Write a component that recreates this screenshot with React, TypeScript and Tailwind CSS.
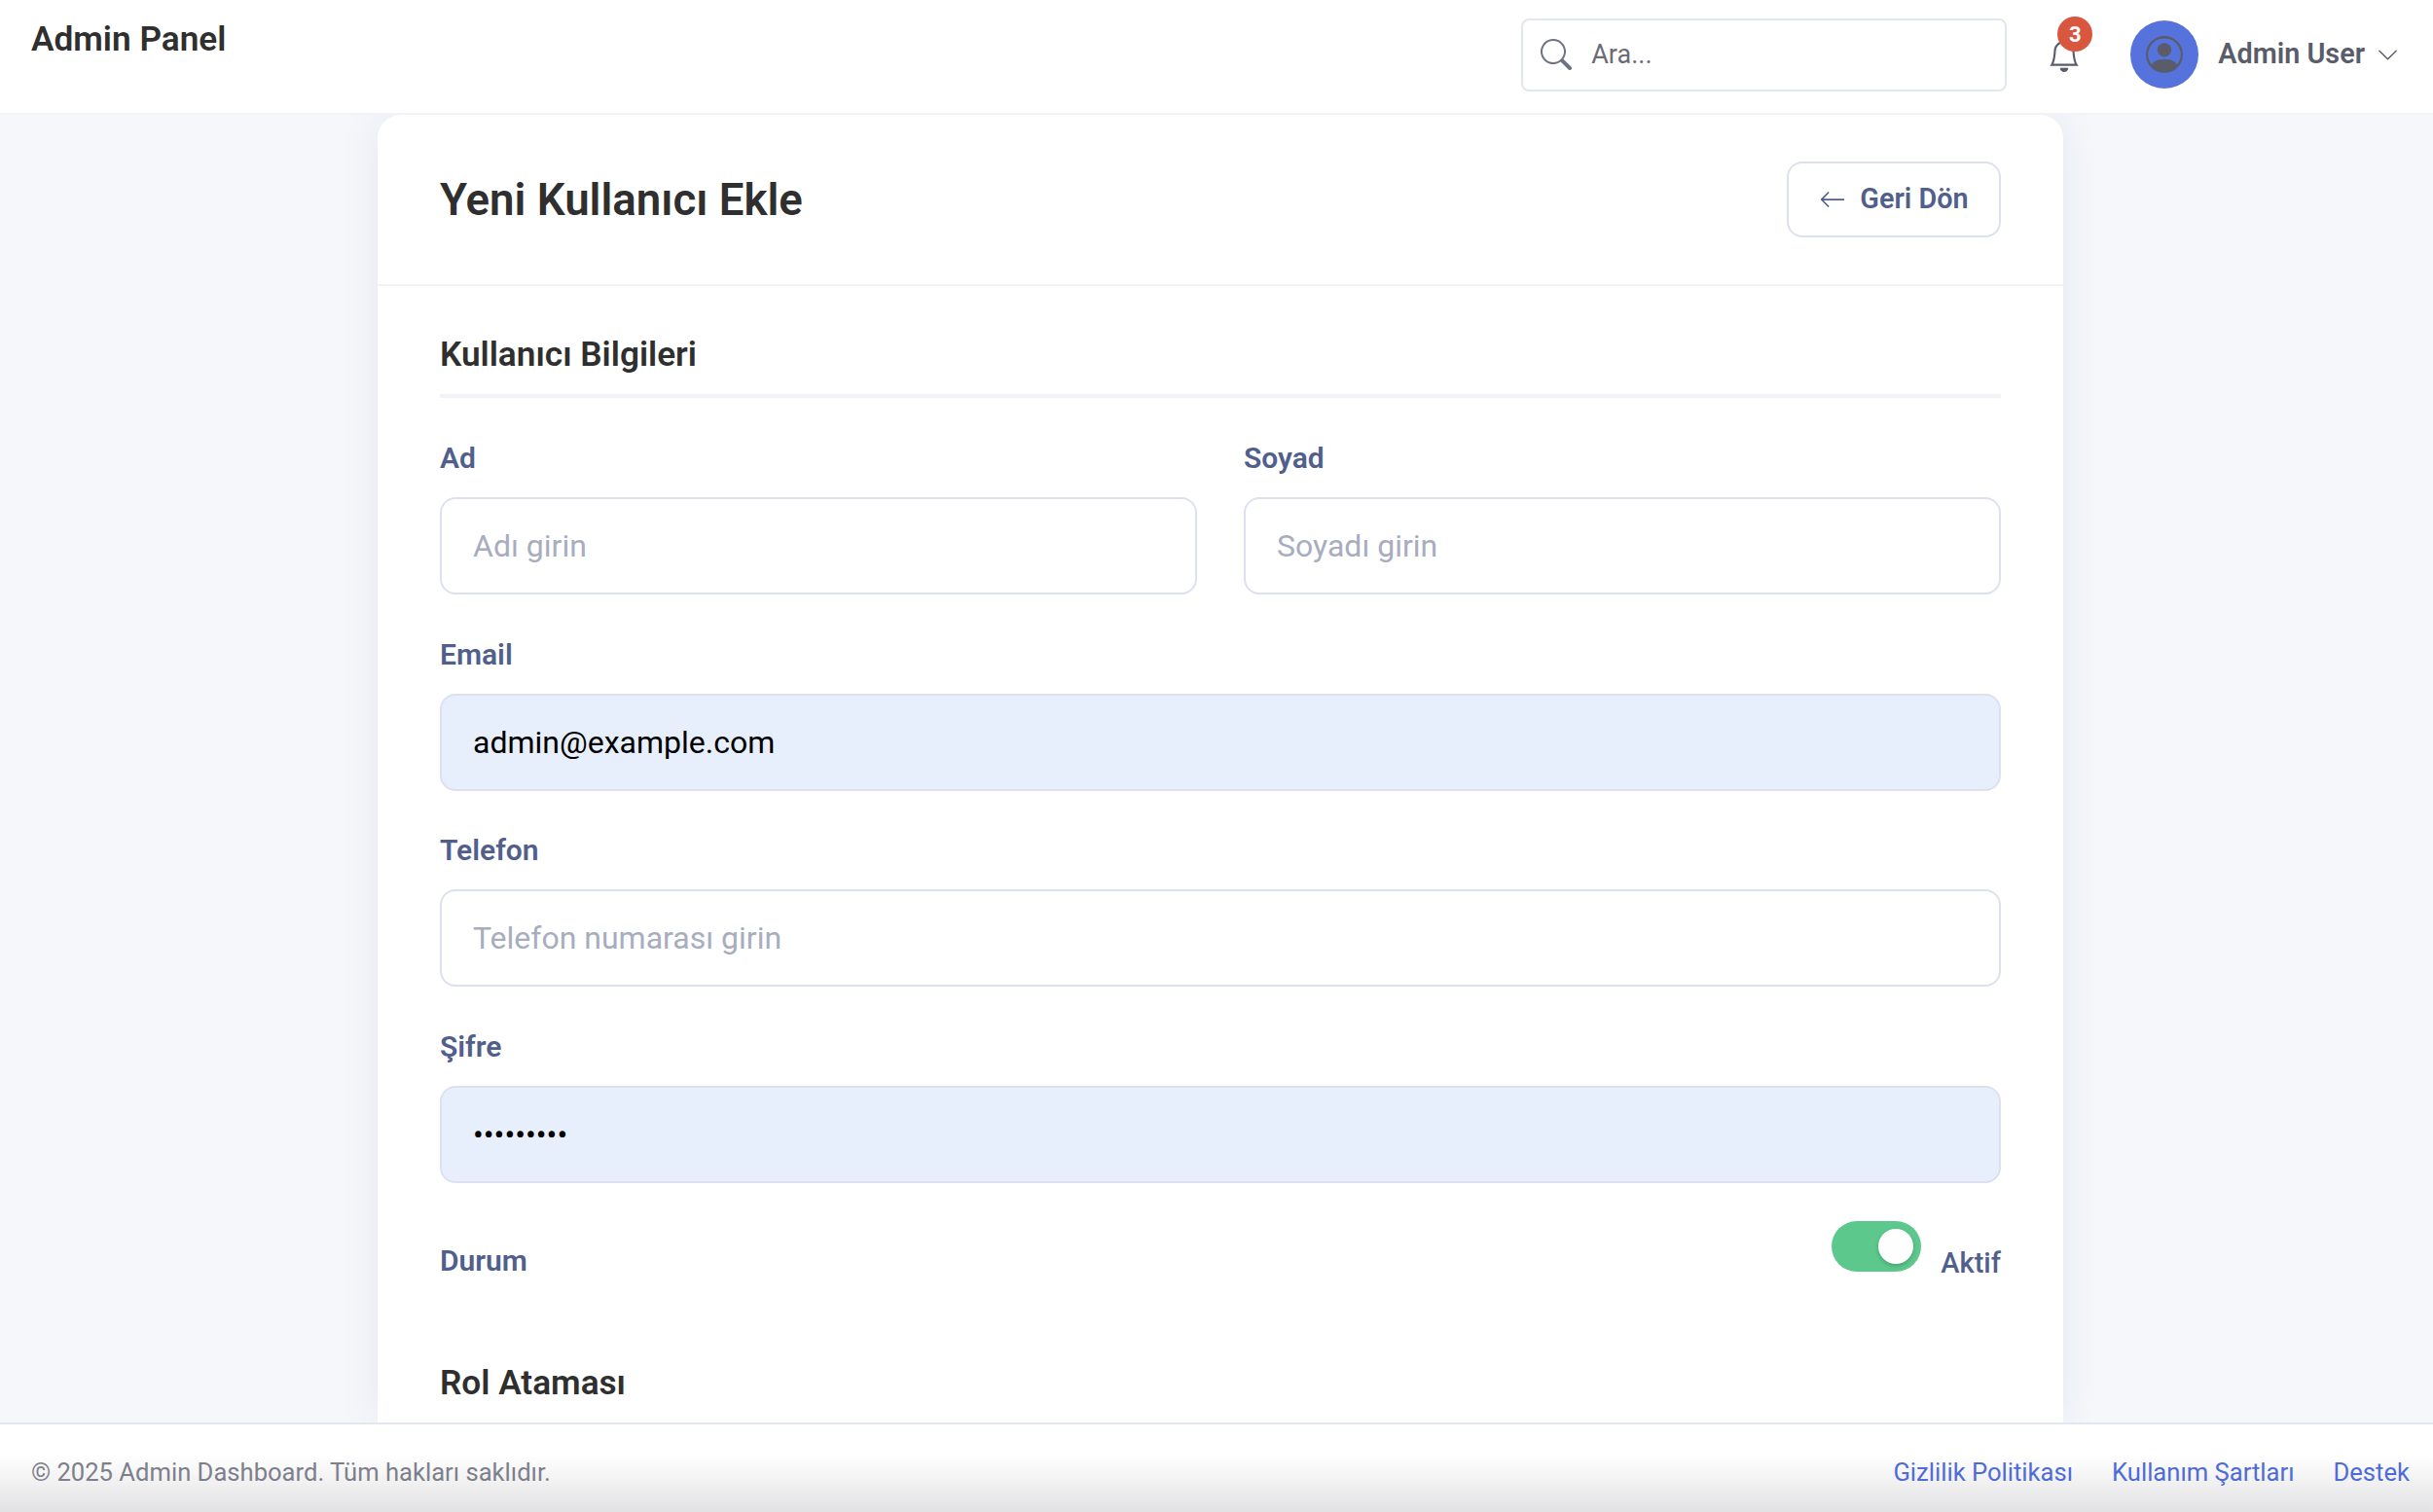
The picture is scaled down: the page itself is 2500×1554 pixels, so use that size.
import React from "react";
import { BsArrowLeft, BsBell, BsChevronDown, BsPersonCircle, BsSearch } from "react-icons/bs";

const labelClass = "block text-[30px] leading-[40px] font-semibold text-[#515f8c]";
const headingClass = "text-[35.2px] leading-[46px] font-semibold text-[#2f2f2f]";
const inputClass =
  "w-full h-[100px] rounded-[16px] border-2 border-[#dde1ef] px-[32px] text-[32px] outline-none placeholder:text-[#a7adbe]";

const Field: React.FC<{
  label: string;
  placeholder?: string;
  value?: string;
  type?: string;
}> = ({ label, placeholder, value, type = "text" }) => (
  <div className="flex flex-col gap-[20px]">
    <label className={labelClass}>{label}</label>
    <input
      type={type}
      placeholder={placeholder}
      defaultValue={value}
      className={`${inputClass} ${value ? "bg-[#e8effc] text-black" : "bg-white"}`}
    />
  </div>
);

const App: React.FC = () => {
  return (
    <div className="h-screen flex flex-col overflow-hidden bg-[#f5f7fb] font-['Roboto',sans-serif]">
      <header className="h-[116px] shrink-0 bg-white flex justify-between pl-[32px] pr-[35px]">
        <div className="pt-[17px] text-[35.2px] leading-[46px] font-semibold text-[#2f2f2f]">
          Admin Panel
        </div>
        <div className="flex items-center pb-[4px]">
          <div className="w-[499px] h-[75px] rounded-[8px] border-2 border-[#e2e6f0] flex items-center pl-[18px] gap-[20px]">
            <BsSearch className="text-[32px] text-[#6f7280]" />
            <span className="text-[27px] text-[#6b6b75]">Ara...</span>
          </div>
          <div className="relative ml-[35px] w-[48px] h-[70px] flex items-center justify-center">
            <BsBell className="text-[34px] text-[#5a5c69] mt-[2px]" />
            <span className="absolute top-[-4px] right-[-5px] w-[36px] h-[36px] rounded-full bg-[#d9573f] text-white text-[22px] font-bold flex items-center justify-center">
              3
            </span>
          </div>
          <div className="ml-[44px] w-[70px] h-[70px] rounded-full bg-[#5673dd] flex items-center justify-center">
            <BsPersonCircle className="text-[38px] text-[#5a5c69]" />
          </div>
          <span className="ml-[20px] text-[28.8px] font-semibold text-[#5a5c69]">
            Admin User
          </span>
          <BsChevronDown className="ml-[12px] text-[23px] text-[#5a5c69]" />
        </div>
      </header>

      <main className="flex-1 min-h-0 overflow-hidden border-t-2 border-[#f1f3f8]">
        <div className="w-[1732px] ml-[388px] bg-white rounded-t-[24px] shadow-[0_0_40px_rgba(40,50,90,0.08)] h-full">
          <div className="h-[176px] px-[64px] flex items-center justify-between border-b-2 border-[#f1f3f8]">
            <h1 className="mt-[2px] text-[45.6px] font-semibold text-[#2f2f2f]">
              Yeni Kullanıcı Ekle
            </h1>
            <button className="w-[220px] h-[78px] rounded-[16px] border-2 border-[#dde1ef] flex items-center justify-center gap-[14px] text-[#515f8c]">
              <BsArrowLeft className="text-[28px]" />
              <span className="text-[28.8px] font-semibold">Geri Dön</span>
            </button>
          </div>
          <div className="px-[64px]">
            <h2 className={`pt-[47px] pb-[18px] border-b-4 border-[#f1f3f8] ${headingClass}`}>
              Kullanıcı Bilgileri
            </h2>
            <div className="mt-[42px] flex flex-col gap-[41.5px]">
              <div className="grid grid-cols-2 gap-[48px]">
                <Field label="Ad" placeholder="Adı girin" />
                <Field label="Soyad" placeholder="Soyadı girin" />
              </div>
              <Field label="Email" value="admin@example.com" />
              <Field label="Telefon" placeholder="Telefon numarası girin" />
              <Field label="Şifre" type="password" value="password1" />
            </div>
            <div className="mt-[39.5px] flex items-start justify-between">
              <span className={`${labelClass} mt-[21px]`}>Durum</span>
              <div className="flex items-start gap-[20px]">
                <div className="w-[92px] h-[52px] rounded-full bg-[#5cc88c] flex items-center justify-end pr-[8px]">
                  <div className="w-[36px] h-[36px] rounded-full bg-white shadow-[0_2px_4px_rgba(0,0,0,0.2)]" />
                </div>
                <span className="mt-[23px] text-[29px] leading-[40px] font-medium text-[#515f8c]">Aktif</span>
              </div>
            </div>
            <h2 className={`mt-[80px] ${headingClass}`}>Rol Ataması</h2>
          </div>
        </div>
      </main>

      <footer className="h-[92px] shrink-0 border-t-2 border-[#e2e6f0] bg-gradient-to-b from-white from-35% to-[#e2e2e4] flex items-center justify-between pl-[32px] pr-[24px] pt-[8px] text-[25.6px]">
        <span className="text-[#7d7f8c]">© 2025 Admin Dashboard. Tüm hakları saklıdır.</span>
        <nav className="flex gap-[40px] text-[#4f6bd8]">
          <a>Gizlilik Politikası</a>
          <a>Kullanım Şartları</a>
          <a>Destek</a>
        </nav>
      </footer>
    </div>
  );
};

export default App;
